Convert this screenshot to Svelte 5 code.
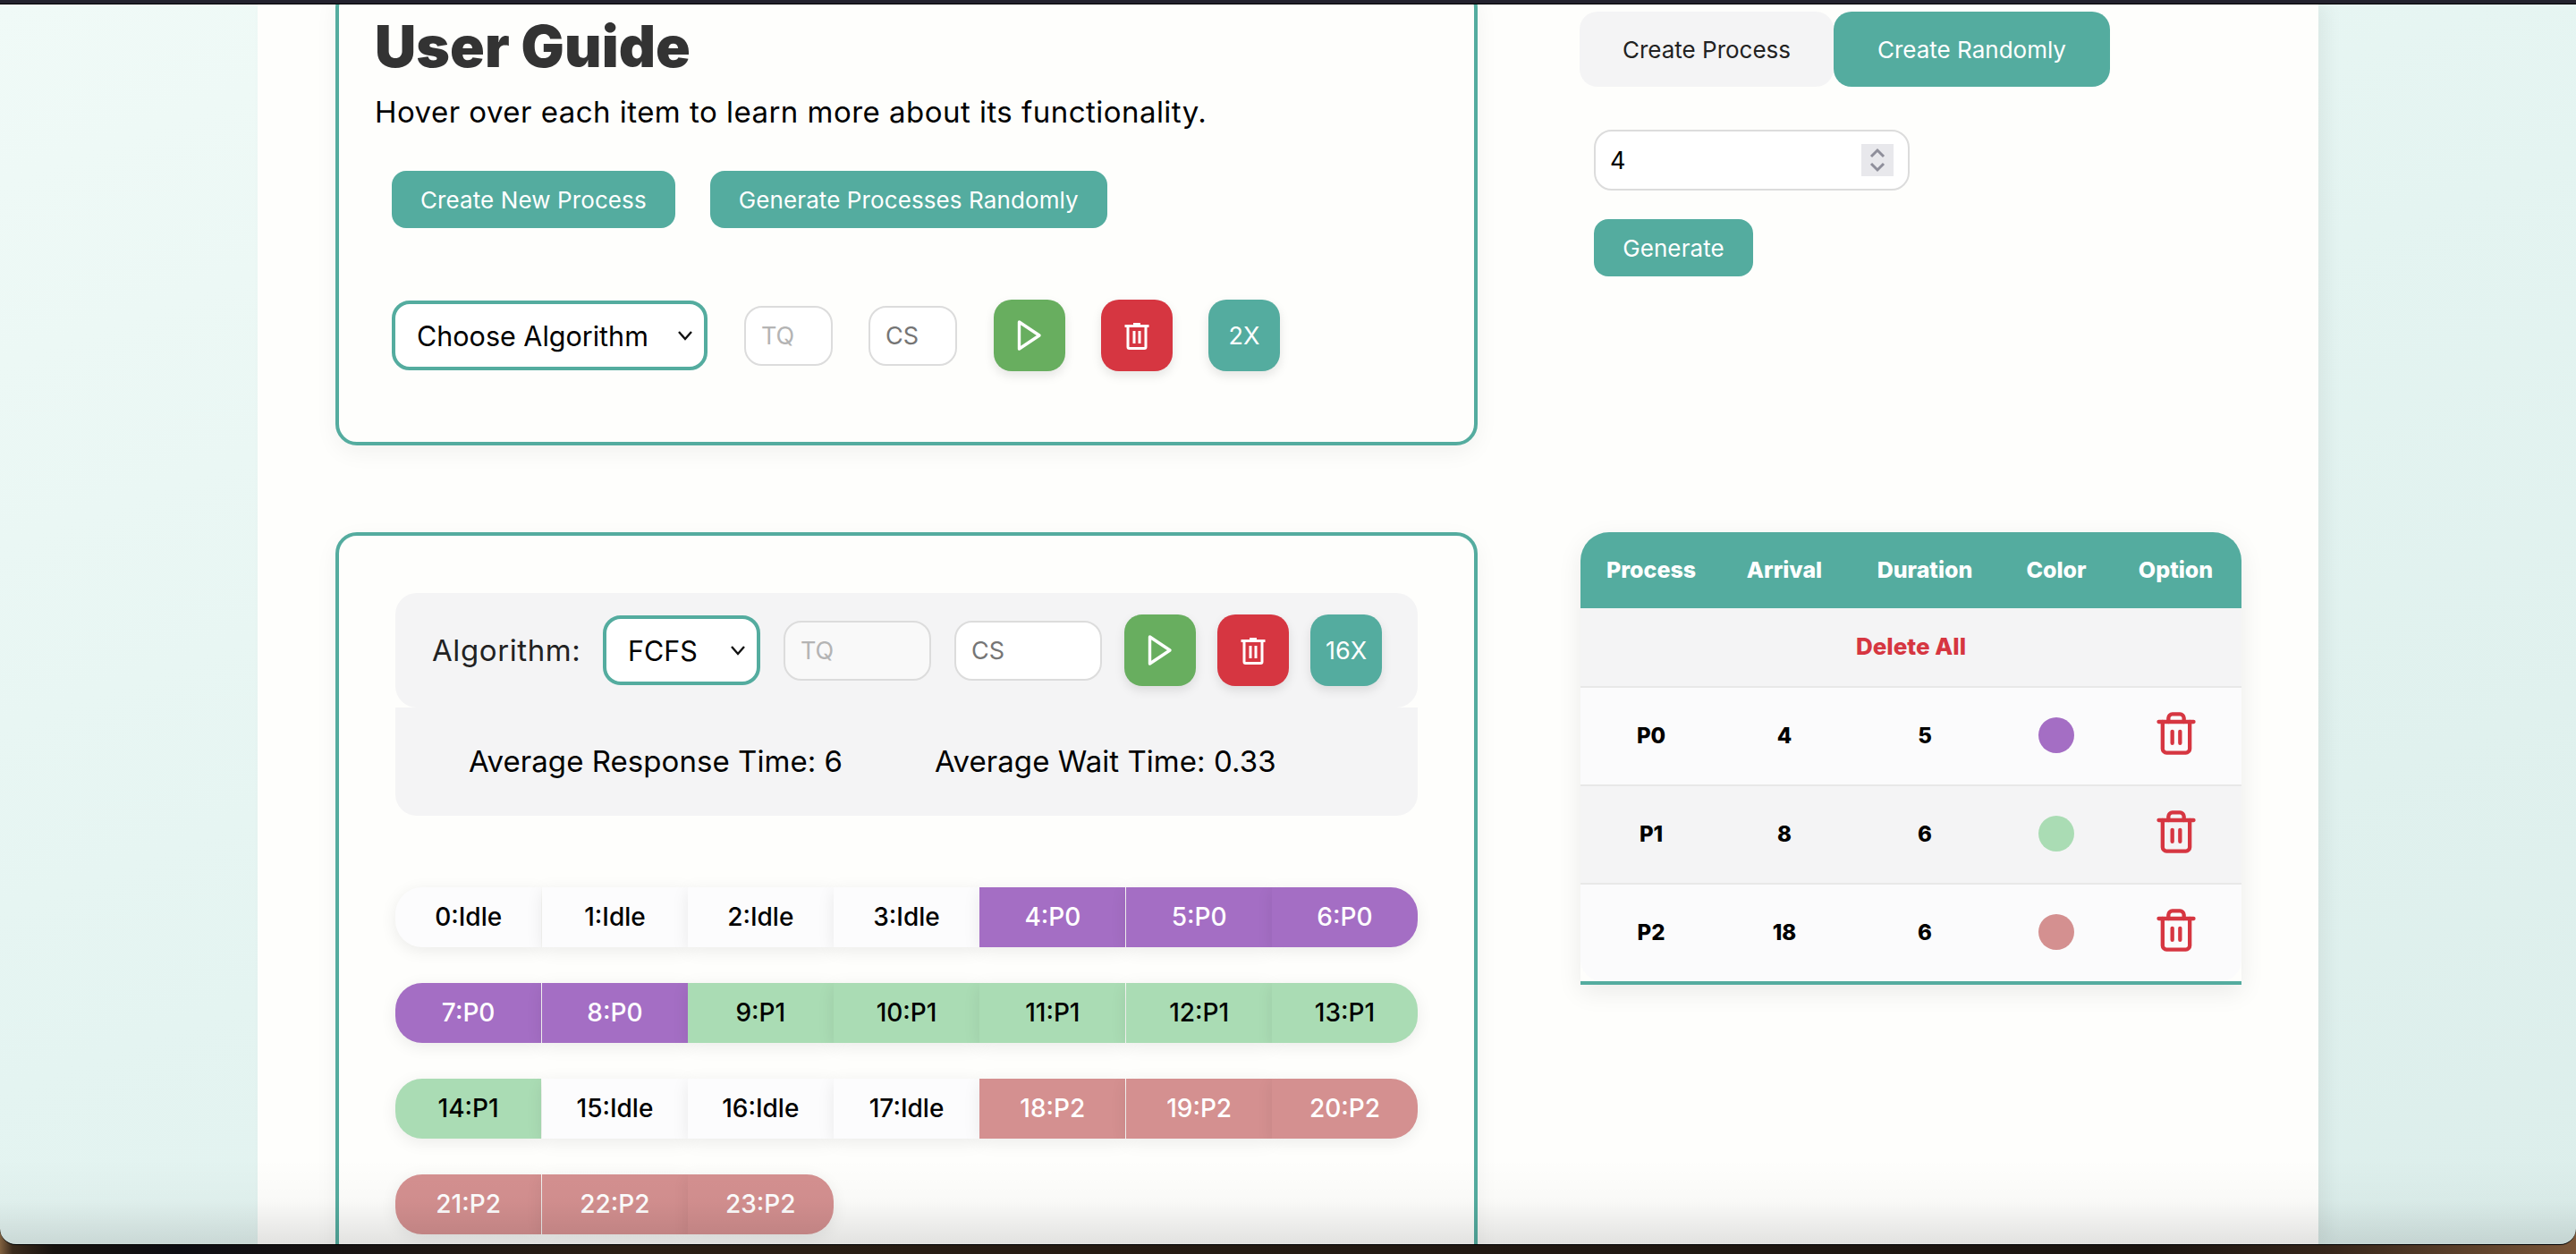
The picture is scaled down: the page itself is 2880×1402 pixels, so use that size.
<script>
  const purple = '#a46ec4';
  const green = '#aadcb4';
  const pink = '#d49090';

  const processes = [
    { name: 'P0', arrival: 4, start: 4, duration: 5, color: purple, light: true },
    { name: 'P1', arrival: 8, start: 9, duration: 6, color: green, light: false },
    { name: 'P2', arrival: 18, start: 18, duration: 6, color: pink, light: true }
  ];

  // one entry per time unit, 24 units in total
  const slots = [];
  for (let t = 0; t < 24; t++) {
    const proc = processes.find((p) => t >= p.start && t < p.start + p.duration);
    slots.push({ label: `${t}:${proc ? proc.name : 'Idle'}`, color: proc ? proc.color : '#fcfcfd', light: proc ? proc.light : false });
  }

  const rows = [];
  for (let i = 0; i < slots.length; i += 7) rows.push(slots.slice(i, i + 7));
</script>

{#snippet playIcon()}
  <svg class="play" viewBox="0 0 30 38" width="30" height="38" aria-hidden="true">
    <path d="M3.500 4 L26 19 L3.500 34 Z" fill="none" stroke="#fff" stroke-width="3.4" stroke-linejoin="round" />
  </svg>
{/snippet}

{#snippet binIcon()}
  <svg viewBox="0 0 28 32" width="28" height="32" aria-hidden="true">
    <path d="M10 2h8v2h-8z M0.500 4h27v3h-27z" fill="#fff" />
    <path d="M4 7v22a1.500 1.500 0 0 0 1.500 1.500h17a1.500 1.500 0 0 0 1.500-1.500V7" fill="none" stroke="#fff" stroke-width="3" />
    <path d="M11 11v14 M17 11v14" stroke="#fff" stroke-width="3" />
  </svg>
{/snippet}

{#snippet trashIcon()}
  <svg viewBox="0 0 24 24" width="52" height="52" fill="none" stroke="#d63641" stroke-width="2" stroke-linecap="round" stroke-linejoin="round" aria-hidden="true">
    <path d="M3 6h18" />
    <path d="M19 6v14c0 1-1 2-2 2H7c-1 0-2-1-2-2V6" />
    <path d="M8 6V4c0-1 1-2 2-2h4c1 0 2 1 2 2v2" />
    <path d="M10 11v6" />
    <path d="M14 11v6" />
  </svg>
{/snippet}

<div class="screen">
  <div class="window">
    <div class="topbar"></div>
    <div class="page">
      <div class="scroller">
        <section class="card guide">
          <h1>User Guide</h1>
          <p class="intro">Hover over each item to learn more about its functionality.</p>
          <div class="guide-actions">
            <button class="btn">Create New Process</button>
            <button class="btn">Generate Processes Randomly</button>
          </div>
          <div class="guide-controls">
            <select class="algo algo-wide">
              <option>Choose Algorithm</option>
            </select>
            <input class="small small-guide first" placeholder="TQ" disabled />
            <input class="small small-guide last" placeholder="CS" />
            <button class="square run">{@render playIcon()}</button>
            <button class="square clear">{@render binIcon()}</button>
            <button class="square speed">2X</button>
          </div>
        </section>

        <aside class="side-top">
          <div class="tabs">
            <button class="tab">Create Process</button>
            <button class="tab active">Create Randomly</button>
          </div>
          <div class="number">
            <input type="text" value="4" />
            <span class="spinner">
              <svg viewBox="0 0 36 36" width="36" height="36" aria-hidden="true">
                <path d="M11 14l7-7 7 7 M11 22l7 7 7-7" fill="none" stroke="#8e8e9a" stroke-width="3" />
              </svg>
            </span>
          </div>
          <button class="btn generate">Generate</button>
        </aside>

        <section class="card result">
          <div class="panel controls">
            <span class="algo-label">Algorithm:</span>
            <select class="algo algo-narrow">
              <option>FCFS</option>
            </select>
            <input class="small small-result tq" placeholder="TQ" disabled />
            <input class="small small-result" placeholder="CS" />
            <button class="square run">{@render playIcon()}</button>
            <button class="square clear">{@render binIcon()}</button>
            <button class="square speed">16X</button>
          </div>
          <div class="panel stats">
            <span class="stat">Average Response Time: 6</span>
            <span>Average Wait Time: 0.33</span>
          </div>

          <div class="gantt">
            {#each rows as row}
              <div class="gantt-row">
                {#each row as slot}
                  <div class="slot" class:light={slot.light} style="background-color: {slot.color};">{slot.label}</div>
                {/each}
              </div>
            {/each}
          </div>
        </section>

        <aside class="side-table">
          <table>
            <thead>
              <tr>
                <th>Process</th>
                <th>Arrival</th>
                <th>Duration</th>
                <th>Color</th>
                <th>Option</th>
              </tr>
            </thead>
            <tbody>
              <tr class="delete-row">
                <td colspan="5">Delete All</td>
              </tr>
              {#each processes as p}
                <tr>
                  <td>{p.name}</td>
                  <td>{p.arrival}</td>
                  <td>{p.duration}</td>
                  <td><span class="dot" style="background-color: {p.color};"></span></td>
                  <td class="option">{@render trashIcon()}</td>
                </tr>
              {/each}
            </tbody>
          </table>
        </aside>
      </div>
    </div>
    <div class="fade"></div>
  </div>
</div>

<style>
  :global(body) {
    margin: 0;
    background: #14110f;
  }

  .screen {
    width: 2880px;
    height: 1402px;
    overflow: hidden;
    font-family: Inter, 'Liberation Sans', sans-serif;
    background: linear-gradient(90deg, #80603f 0, #3a2a1c 14px, #17130f 60px, #0d0d12 200px, #2a1e14 700px, #1a1410 2400px, #35251a 2600px, #7a5638 2880px);
  }

  .window {
    position: relative;
    height: 1391px;
    overflow: hidden;
    border-bottom: 1px solid #000;
    border-radius: 0 0 18px 18px;
    background: linear-gradient(160deg, #f0faf7 0, #e4f4f1 50%, #dceeeb 100%);
  }

  .topbar {
    position: relative;
    z-index: 2;
    height: 4px;
    background: #23222e;
    border-bottom: 1px solid #000;
  }

  .page {
    width: 2304px;
    height: 1386px;
    margin-left: 288px;
    background: #fefefc;
    box-shadow: 10px 0 18px rgba(0, 0, 0, 0.05);
    overflow: hidden;
  }

  .scroller {
    display: grid;
    grid-template-columns: 1277px 740px;
    column-gap: 114px;
    row-gap: 97px;
    align-items: start;
    margin-top: -20px;
    padding-left: 87px;
  }

  .fade {
    position: absolute;
    left: 0;
    right: 0;
    bottom: 0;
    height: 96px;
    background: linear-gradient(180deg, rgba(0, 0, 0, 0) 0, rgba(0, 0, 0, 0.02) 50%, rgba(0, 0, 0, 0.11) 100%);
    pointer-events: none;
  }

  .card {
    box-sizing: border-box;
    border: 4px solid #54ac9f;
    border-radius: 24px;
    background: #fefefc;
    box-shadow: 0 8px 26px rgba(0, 0, 0, 0.05);
  }

  .guide {
    height: 513px;
    padding: 25px 40px 0;
  }

  h1 {
    margin: 0;
    font-size: 64px;
    line-height: 76px;
    font-weight: 900;
    color: #333;
    letter-spacing: 0.1px;
  }

  .intro {
    margin: 11px 0 0;
    font-size: 33px;
    line-height: 48px;
    letter-spacing: 0.47px;
    color: #000;
  }

  .guide-actions {
    display: flex;
    gap: 39px;
    margin: 42px 0 0 19px;
  }

  .btn {
    height: 64px;
    padding: 0 32px;
    border: 0;
    border-radius: 16px;
    background: #54ac9f;
    color: #fff;
    font-family: Inter, sans-serif;
    font-size: 26px;
    font-weight: 400;
    letter-spacing: 0.1px;
  }

  .guide-controls {
    display: flex;
    align-items: center;
    margin: 80px 0 0 19px;
  }

  .algo {
    box-sizing: border-box;
    height: 78px;
    border: 4px solid #54ac9f;
    border-radius: 20px;
    color: #000;
    font-family: Inter, sans-serif;
    font-size: 30.5px;
    padding: 0 0 0 24px;
    appearance: none;
    background: #fff url("data:image/svg+xml,%3Csvg xmlns='http://www.w3.org/2000/svg' width='18' height='12'%3E%3Cpath d='M2 2l7 8 7-8' fill='none' stroke='%23111' stroke-width='2.4'/%3E%3C/svg%3E") no-repeat right 12px center;
  }

  .algo-wide {
    width: 353px;
  }

  .algo-narrow {
    width: 176px;
    margin-right: 26px;
  }

  .small {
    box-sizing: border-box;
    height: 67px;
    border: 2px solid #dcdcdc;
    border-radius: 20px;
    background: #fff;
    font-family: Inter, sans-serif;
    font-size: 27px;
    padding: 0 0 0 17px;
  }

  .small::placeholder {
    color: #757575;
    opacity: 1;
  }

  .small:disabled::placeholder {
    color: #b4b4b4;
  }

  .small-guide {
    width: 99px;
    margin-right: 40px;
  }

  .small-guide.first {
    margin-left: 41px;
  }

  .small-guide.last {
    margin-right: 41px;
  }

  .small-result {
    width: 165px;
    margin-right: 25px;
  }

  .small-result.tq {
    background: #f9f9f9;
    margin-right: 26px;
  }

  .square {
    display: flex;
    align-items: center;
    justify-content: center;
    width: 80px;
    height: 80px;
    padding: 0;
    border: 0;
    border-radius: 20px;
    color: #fff;
    font-family: Inter, sans-serif;
    font-size: 27px;
    box-shadow: 0 5px 12px rgba(0, 0, 0, 0.1);
    margin-right: 40px;
  }

  .result .square {
    margin-right: 24px;
  }

  .run {
    background: #68ae5f;
  }

  .clear {
    background: #d63641;
  }

  .speed {
    background: #54ac9f;
  }

  .side-top {
    padding-top: 28px;
  }

  .tabs {
    display: flex;
  }

  .tab {
    height: 84px;
    border: 0;
    border-radius: 20px;
    background: #f4f4f5;
    color: #222;
    font-family: Inter, sans-serif;
    font-size: 26px;
    width: 284px;
  }

  .tab.active {
    width: 309px;
    background: #54ac9f;
    color: #fff;
  }

  .number {
    position: relative;
    box-sizing: border-box;
    width: 353px;
    height: 68px;
    margin: 48px 0 0 16px;
  }

  .number input {
    box-sizing: border-box;
    width: 100%;
    height: 100%;
    border: 2px solid #dcdcdc;
    border-radius: 20px;
    padding: 0 0 0 16px;
    background: #fff;
    font-family: Inter, sans-serif;
    font-size: 27px;
    color: #000;
  }

  .spinner {
    position: absolute;
    top: 16px;
    right: 18px;
    width: 36px;
    height: 36px;
    background: #e8e8ec;
  }

  .spinner svg {
    display: block;
  }

  .generate {
    display: block;
    margin: 32px 0 0 16px;
    width: 178px;
    padding: 0;
  }

  .result {
    height: 1000px;
    padding: 64px 63px 0;
  }

  .panel {
    background: #f4f4f5;
  }

  .controls {
    position: relative;
    display: flex;
    align-items: center;
    height: 128px;
    padding-left: 41px;
    border-radius: 24px;
  }

  .algo-label {
    width: 191px;
    font-size: 33px;
    letter-spacing: 0.6px;
    color: #222;
  }

  .stats {
    display: flex;
    align-items: center;
    box-sizing: border-box;
    height: 121px;
    padding: 0 0 2px 82px;
    border-radius: 0 0 24px 24px;
    font-size: 33px;
    letter-spacing: 0.05px;
    color: #000;
  }

  .stat {
    width: 521px;
  }

  .gantt {
    display: flex;
    flex-direction: column;
    gap: 40px;
    margin-top: 80px;
  }

  .gantt-row {
    display: flex;
  }

  .slot {
    flex: 0 0 163.3px;
    box-sizing: border-box;
    height: 67px;
    padding-bottom: 2px;
    display: flex;
    align-items: center;
    justify-content: center;
    font-size: 28px;
    font-weight: 500;
    color: #000;
    box-shadow: 0 4px 18px rgba(0, 0, 0, 0.08);
  }

  .slot.light {
    color: #fff;
  }

  .slot:first-child {
    border-radius: 30px 0 0 30px;
  }

  .slot:last-child {
    border-radius: 0 30px 30px 0;
  }

  .slot:nth-child(2),
  .slot:nth-child(6) {
    margin-left: 1px;
    flex-basis: 162.3px;
  }

  .side-table {
    padding-left: 1px;
  }

  table {
    width: 739px;
    table-layout: fixed;
    border-collapse: separate;
    border-spacing: 0;
    border-bottom: 4px solid #54ac9f;
    box-shadow: 0 8px 28px rgba(0, 0, 0, 0.08);
    border-radius: 32px 32px 0 0;
  }

  th {
    height: 85px;
    padding: 0 0 2px;
    box-sizing: border-box;
    background: #54ac9f;
    color: #fff;
    font-size: 25px;
    font-weight: 800;
  }

  th:nth-child(1) {
    width: 158px;
    border-top-left-radius: 32px;
  }

  th:nth-child(2) {
    width: 140px;
  }

  th:nth-child(3) {
    width: 174px;
  }

  th:nth-child(4) {
    width: 120px;
  }

  th:nth-child(5) {
    border-top-right-radius: 32px;
  }

  td {
    box-sizing: border-box;
    height: 110px;
    padding: 0 0 2px;
    text-align: center;
    font-size: 24px;
    font-weight: 800;
    color: #000;
    background: #fbfbfc;
    border-bottom: 2px solid #e8e8e8;
  }

  tbody tr:nth-child(odd) td {
    background: #f4f4f5;
  }

  tbody tr:last-child td {
    height: 108px;
    border-bottom: 0;
  }

  tbody tr:last-child td:first-child {
    border-bottom-left-radius: 24px;
  }

  tbody tr:last-child td:last-child {
    border-bottom-right-radius: 24px;
  }

  .delete-row td {
    height: 89px;
    font-size: 26px;
    color: #d63641;
  }

  .dot {
    display: inline-block;
    width: 40px;
    height: 40px;
    border-radius: 50%;
    vertical-align: middle;
  }

  .option svg {
    display: block;
    margin: -5px auto 0;
  }
</style>
